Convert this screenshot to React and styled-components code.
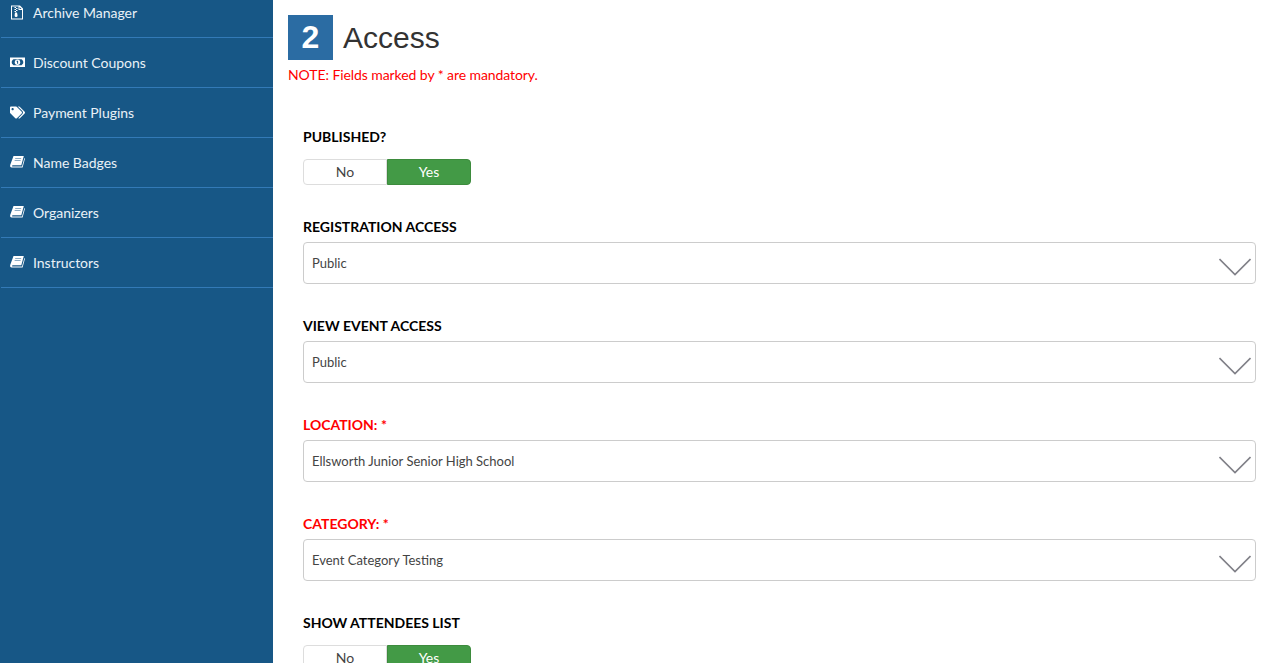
import React from "react";
import styled, { createGlobalStyle } from "styled-components";
import { FaTags } from "react-icons/fa";

const GlobalStyle = createGlobalStyle`
  html, body {
    margin: 0;
    height: 100%;
    overflow: hidden;
    background: #fff;
    font-family: "Lato", "Liberation Sans", sans-serif;
  }
`

const Page = styled.div`
  display: flex;
  height: 663px;
  overflow: hidden;
`
const Sidebar = styled.aside`
  flex: 0 0 273px;
  background: #175786;
  overflow: hidden;
`
const MenuList = styled.ul`
  list-style: none;
  margin: -12px 0 0;
  padding: 0 0 0 1px;
`
const MenuItem = styled.li`
  display: flex;
  align-items: center;
  height: 49px;
  padding-left: 9px;
  border-bottom: 1px solid #337ab7;
  color: #e9f1f7;
  font-size: 14px;
  letter-spacing: -0.02px;
`
const IconSlot = styled.span`
  display: flex;
  align-items: center;
  flex: 0 0 23px;
  height: 15px;
  color: #fff;
  svg {
    width: 15px;
    height: 15px;
  }
`
const Main = styled.main`
  flex: 1;
  padding: 15px 30px 0 15px;
  min-width: 0;
`
const Heading = styled.div`
  display: flex;
  align-items: center;
  gap: 10px;
`
const StepBadge = styled.span`
  display: flex;
  align-items: center;
  justify-content: center;
  width: 45px;
  height: 45px;
  background: #2b6ca3;
  color: #fff;
  font: bold 32px "Liberation Sans", sans-serif;
`
const Title = styled.h1`
  margin: 0;
  color: #333;
  font: 400 30px "Liberation Sans", sans-serif;
`
const Note = styled.p`
  margin: 5px 0 42px;
  height: 20px;
  line-height: 20px;
  color: #f00;
  font-size: 14px;
  letter-spacing: -0.08px;
`
const Form = styled.div`
  padding-left: 15px;
`
const Field = styled.div`
  margin-bottom: 32px;
`
const Label = styled.label`
  display: block;
  height: 20px;
  line-height: 20px;
  margin-bottom: ${p => (p.$toggle ? "12px" : "5px")};
  color: ${p => (p.$required ? "#f00" : "#000")};
  font-size: 14px;
  font-weight: 700;
  text-transform: uppercase;
`
const Toggle = styled.div`
  display: flex;
  width: 168px;
  height: 26px;
`
const ToggleOption = styled.span`
  display: flex;
  align-items: center;
  justify-content: center;
  flex: 1;
  box-sizing: border-box;
  padding-bottom: 2px;
  font-size: 14px;
  border: 1px solid ${p => (p.$active ? "#3d8b3d" : "#ddd")};
  border-radius: ${p => (p.$active ? "0 4px 4px 0" : "4px 0 0 4px")};
  background: ${p => (p.$active ? "#439a46" : "#fff")};
  color: ${p => (p.$active ? "#fff" : "#444")};
`
const Select = styled.div`
  display: flex;
  align-items: center;
  justify-content: space-between;
  box-sizing: border-box;
  height: 42px;
  padding: 0 4px 0 8px;
  border: 1px solid #ccc;
  border-radius: 4px;
  color: #444;
  font-size: 13px;
`
const Chevron = styled.svg`
  width: 32px;
  height: 18px;
  margin-top: 8px;
  fill: none;
  stroke: #808088;
  stroke-width: 1.6;
`

const ArchiveIcon = () => (
  <svg viewBox="0 0 15 15" fill="currentColor">
    <path fillRule="evenodd" d="M1 .5h9l3 3V14.500H1zM2 1.500v12h10V5H8.500V1.500zM9.500 2v2H11.500z" />
    <path d="M4.500 2h1.500v1H4.500zM6 3h1.500v1H6zM4.500 4h1.500v1H4.500zM6 5h1.500v1H6zM4.500 6h1.500v1H4.500zM5 7.500h2l.6 3a1.500 1.500 0 1 1-3 0z" />
  </svg>
)

const MoneyIcon = () => (
  <svg viewBox="0 0 15 15" fill="currentColor">
    <path fillRule="evenodd" d="M0 2.500h15v9.500H0zM3.500 4.300C2.600 5 1.700 6 1.700 7.250S2.600 9.500 3.500 10.200h8C12.400 9.500 13.300 8.500 13.300 7.250S12.400 5 11.500 4.300z" />
    <circle cx="7.500" cy="7.250" r="2.700" />
    <path fill="#175786" d="M6.600 5.700h1.500v3.100h-1v-2h-.5z" />
  </svg>
)

const BookIcon = () => (
  <svg viewBox="0 0 15 15" fill="currentColor">
    <path fillRule="evenodd" d="M3.500 1h10.300l-2.500 9.300H2.800c-1 0-1 1.300 0 1.300h9.200l2.400-8.700.6.500-2.400 9H2.200C.500 12.900-.200 11.500.200 10zM5.200 3.400l-.1.500h6l.1-.5zM4.700 5.200l-.1.500h6l.1-.5z" />
  </svg>
)

const menuItems = [
  { label: "Archive Manager", icon: <ArchiveIcon /> },
  { label: "Discount Coupons", icon: <MoneyIcon /> },
  { label: "Payment Plugins", icon: <FaTags /> },
  { label: "Name Badges", icon: <BookIcon /> },
  { label: "Organizers", icon: <BookIcon /> },
  { label: "Instructors", icon: <BookIcon /> },
]

const YesNo = () => (
  <Toggle>
    <ToggleOption>No</ToggleOption>
    <ToggleOption $active>Yes</ToggleOption>
  </Toggle>
)

const SelectField = ({ label, value, required }) => (
  <Field>
    <Label $required={required}>{label}</Label>
    <Select>
      {value}
      <Chevron viewBox="0 0 32 18"><path d="M0.500 1 16 16.500 31.500 1" /></Chevron>
    </Select>
  </Field>
)

const App = () => (
  <>
    <GlobalStyle />
    <Page>
      <Sidebar>
        <MenuList>
          {menuItems.map(item => (
            <MenuItem key={item.label}>
              <IconSlot>{item.icon}</IconSlot>
              {item.label}
            </MenuItem>
          ))}
        </MenuList>
      </Sidebar>
      <Main>
        <Heading>
          <StepBadge>2</StepBadge>
          <Title>Access</Title>
        </Heading>
        <Note>NOTE: Fields marked by * are mandatory.</Note>
        <Form>
          <Field>
            <Label $toggle>Published?</Label>
            <YesNo />
          </Field>
          <SelectField label="Registration Access" value="Public" />
          <SelectField label="View Event Access" value="Public" />
          <SelectField label="Location: *" value="Ellsworth Junior Senior High School" required />
          <SelectField label="Category: *" value="Event Category Testing" required />
          <Field>
            <Label $toggle>Show Attendees List</Label>
            <YesNo />
          </Field>
        </Form>
      </Main>
    </Page>
  </>
)

export default App;
